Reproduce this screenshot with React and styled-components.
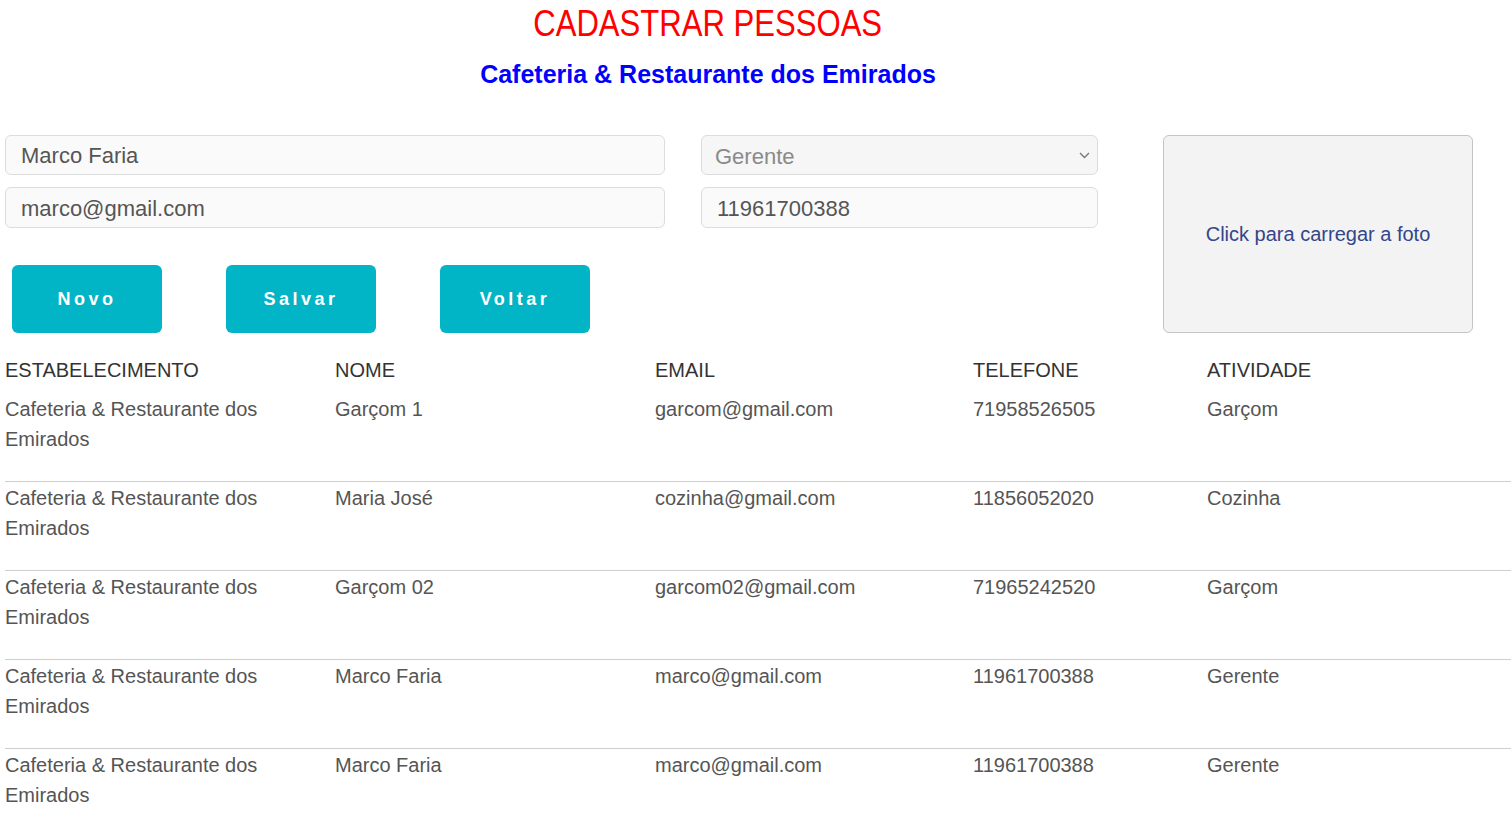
import React from 'react';
import styled, { createGlobalStyle } from 'styled-components';

const GlobalStyle = createGlobalStyle`
  body {
    margin: 0;
    background: #fff;
    font-family: "Liberation Sans", Arial, sans-serif;
  }
`;

const Container = styled.div`
  width: 1511px;
`;

const Header = styled.header`
  width: 1416px;
  text-align: center;
`;

// the original face is a condensed grotesque; squeeze the caps to its width
const Title = styled.h1`
  display: inline-block;
  margin: 0;
  padding-top: 2px;
  font-weight: 400;
  font-size: 37px;
  line-height: 44px;
  color: #ff0000;
  transform: scaleX(0.84);
`;

const Subtitle = styled.h2`
  margin: 14px 0 0;
  font-size: 25px;
  line-height: 28px;
  font-weight: 700;
  color: #0000ff;
`;

const FormArea = styled.section`
  display: flex;
  align-items: flex-start;
  margin-top: 47px;
  padding-left: 5px;
`;

const FormColumn = styled.div`
  display: flex;
  flex-direction: column;
`;

const Fields = styled.div`
  display: grid;
  grid-template-columns: 660px 397px;
  column-gap: 36px;
  row-gap: 12px;
`;

const Input = styled.input`
  box-sizing: border-box;
  height: ${(p) => p.$h || 40}px;
  width: 100%;
  padding: 2px 15px 0;
  border: 1px solid #dcdcdc;
  border-radius: 6px;
  background: #fafafa;
  font-family: inherit;
  font-size: 22px;
  color: #555;
  outline: none;
`;

const SelectWrap = styled.div`
  position: relative;
`;

const Select = styled.select`
  box-sizing: border-box;
  appearance: none;
  height: 40px;
  width: 100%;
  padding: 2px 13px 0;
  border: 1px solid #dcdcdc;
  border-radius: 6px;
  background: #f6f6f6;
  font-family: inherit;
  font-size: 22px;
  color: #8a8a8a;
  outline: none;
`;

const Chevron = styled.svg`
  position: absolute;
  right: 8px;
  top: 17px;
  pointer-events: none;
`;

const Buttons = styled.div`
  display: flex;
  gap: 64px;
  margin-top: 37px;
  padding-left: 7px;
`;

const Button = styled.button`
  width: 150px;
  height: 68px;
  border: none;
  border-radius: 6px;
  background: #02b5c6;
  color: #fff;
  font-family: inherit;
  font-weight: 700;
  font-size: 18px;
  letter-spacing: 3.5px;
  cursor: pointer;
`;

const PhotoBox = styled.div`
  box-sizing: border-box;
  width: 310px;
  height: 198px;
  margin-left: 65px;
  display: flex;
  align-items: center;
  justify-content: center;
  background: #f3f3f3;
  border: 1px solid #c4c4c4;
  border-radius: 6px;
  color: #34468a;
  font-size: 20px;
  cursor: pointer;
`;

const Table = styled.div`
  margin-top: 22px;
`;

const Row = styled.div`
  display: grid;
  grid-template-columns: 330px 320px 318px 234px 1fr;
  margin-left: 5px;
  font-size: 20px;
  line-height: 30px;
  color: ${(p) => (p.$head ? '#333' : '#555')};
  padding: ${(p) => (p.$head ? '0 0 8px' : '1px 0 27px')};
  border-bottom: ${(p) => (p.$head ? 'none' : '1px solid #cfcfcf')};
`;

const Cell = styled.div`
  padding-right: 12px;
`;

const pessoas = [
  { nome: 'Garçom 1', email: 'garcom@gmail.com', tel: '71958526505', atv: 'Garçom' },
  { nome: 'Maria José', email: 'cozinha@gmail.com', tel: '11856052020', atv: 'Cozinha' },
  { nome: 'Garçom 02', email: 'garcom02@gmail.com', tel: '71965242520', atv: 'Garçom' },
  { nome: 'Marco Faria', email: 'marco@gmail.com', tel: '11961700388', atv: 'Gerente' },
  { nome: 'Marco Faria', email: 'marco@gmail.com', tel: '11961700388', atv: 'Gerente' },
];

const App = () => {
  return (
    <Container>
      <GlobalStyle />
      <Header>
        <Title>CADASTRAR PESSOAS</Title>
        <Subtitle>Cafeteria &amp; Restaurante dos Emirados</Subtitle>
      </Header>
      <FormArea>
        <FormColumn>
          <Fields>
            <Input defaultValue="Marco Faria" />
            <SelectWrap>
              <Select defaultValue="Gerente">
                <option>Gerente</option>
                <option>Garçom</option>
                <option>Cozinha</option>
              </Select>
              <Chevron width="11" height="7" viewBox="0 0 11 7">
                <path d="M1 1l4.5 4.5L10 1" fill="none" stroke="#777" strokeWidth="1.4" />
              </Chevron>
            </SelectWrap>
            <Input $h={41} defaultValue="marco@gmail.com" />
            <Input $h={41} defaultValue="11961700388" />
          </Fields>
          <Buttons>
            <Button>Novo</Button>
            <Button>Salvar</Button>
            <Button>Voltar</Button>
          </Buttons>
        </FormColumn>
        <PhotoBox>Click para carregar a foto</PhotoBox>
      </FormArea>
      <Table>
        <Row $head>
          <Cell>ESTABELECIMENTO</Cell>
          <Cell>NOME</Cell>
          <Cell>EMAIL</Cell>
          <Cell>TELEFONE</Cell>
          <Cell>ATIVIDADE</Cell>
        </Row>
        {pessoas.map((p, i) => (
          <Row key={i}>
            <Cell>Cafeteria &amp; Restaurante dos Emirados</Cell>
            <Cell>{p.nome}</Cell>
            <Cell>{p.email}</Cell>
            <Cell>{p.tel}</Cell>
            <Cell>{p.atv}</Cell>
          </Row>
        ))}
      </Table>
    </Container>
  );
};

export default App;
